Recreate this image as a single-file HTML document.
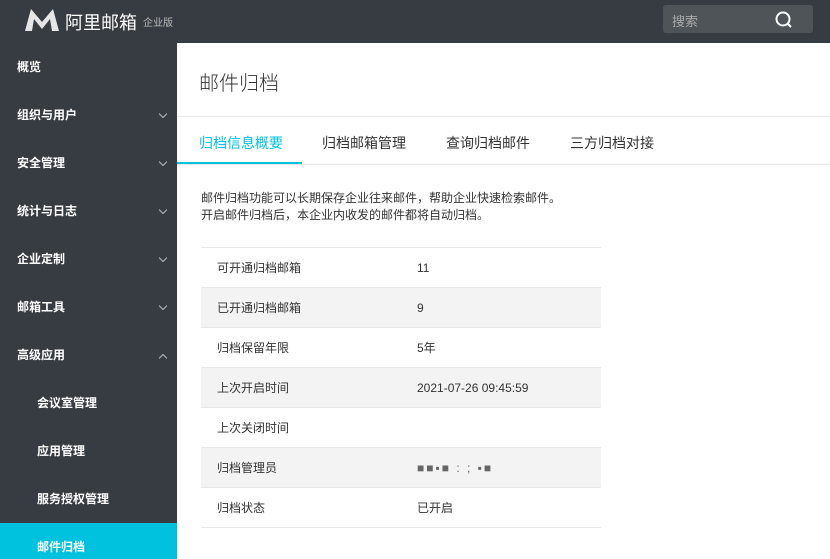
<!DOCTYPE html><html><head><meta charset="utf-8"><style>
*{margin:0;padding:0;box-sizing:border-box}
body{width:830px;height:559px;overflow:hidden;font-family:"Liberation Sans","Noto Sans CJK SC",sans-serif;background:#fff;position:relative}
.top{position:absolute;left:0;top:0;width:830px;height:43px;background:#373c42}
.side{position:absolute;left:0;top:43px;width:177px;height:516px;background:#373c42;overflow:hidden}
.side div{height:48px;line-height:48px;color:#fff;font-size:12px;font-weight:bold;padding-left:17px;position:relative}
.side div.sub{padding-left:37px}
.side div.act{background:#00c1de}
.chev{position:absolute;right:11px;top:20px;width:6px;height:6px;border-right:1px solid #bbb;border-bottom:1px solid #bbb;transform:rotate(45deg)}
.up{transform:rotate(-135deg);top:24px}
.h1{position:absolute;left:199px;top:67px;font-size:20px;color:#333;font-weight:300}
.line1{position:absolute;left:177px;top:116px;width:653px;height:1px;background:#e8e8e8}
.tabs{position:absolute;left:177px;top:117px;width:653px;height:48px;border-bottom:1px solid #e5e5e5}
.tab{position:absolute;top:16px;font-size:14px;color:#333}
.desc{position:absolute;left:201px;top:190px;font-size:12px;color:#333;line-height:17px}
table{position:absolute;left:201px;top:247px;width:400px;border-collapse:collapse;font-size:12px;color:#333}
td{height:40px;border-top:1px solid #e8e8e8;border-bottom:1px solid #e8e8e8}
td:first-child{padding-left:16px;width:216px}
tr:nth-child(even){background:#f3f3f3}
</style></head><body>
<div class="top">
<svg style="position:absolute;left:25px;top:9px" width="34" height="22" viewBox="0 0 34 22"><path d="M0 22 L6 0 L17 13 L28 0 L34 22 L27 22 L25 10 L17 20 L9 10 L7 22Z" fill="#e6e6e6"/></svg>
<div style="position:absolute;left:65px;top:9px;color:#fff;font-size:18px;letter-spacing:0">阿里邮箱</div>
<div style="position:absolute;left:143px;top:14px;color:#bbb;font-size:10px">企业版</div>
<div style="position:absolute;left:663px;top:5px;width:150px;height:28px;background:#4e5458;border-radius:3px"><span style="position:absolute;left:9px;top:6px;font-size:13px;color:#aaa">搜索</span>
<svg style="position:absolute;left:111px;top:5px" width="20" height="20" viewBox="0 0 20 20"><circle cx="9" cy="9" r="6.5" stroke="#fff" stroke-width="2" fill="none"/><path d="M13 13 L17 17" stroke="#fff" stroke-width="2"/></svg></div>
</div>
<div class="side">
<div>概览</div>
<div>组织与用户<i class="chev"></i></div>
<div>安全管理<i class="chev"></i></div>
<div>统计与日志<i class="chev"></i></div>
<div>企业定制<i class="chev"></i></div>
<div>邮箱工具<i class="chev"></i></div>
<div>高级应用<i class="chev up"></i></div>
<div class="sub">会议室管理</div>
<div class="sub">应用管理</div>
<div class="sub">服务授权管理</div>
<div class="sub act">邮件归档</div>
</div>
<div class="h1">邮件归档</div>
<div class="line1"></div>
<div class="tabs">
<div class="tab" style="left:22px;color:#00c1de">归档信息概要</div>
<div style="position:absolute;left:0;top:45px;width:125px;height:2px;background:#00c1de"></div>
<div class="tab" style="left:145px">归档邮箱管理</div>
<div class="tab" style="left:269px">查询归档邮件</div>
<div class="tab" style="left:393px">三方归档对接</div>
</div>
<div class="desc">邮件归档功能可以长期保存企业往来邮件，帮助企业快速检索邮件。<br>开启邮件归档后，本企业内收发的邮件都将自动归档。</div>
<table>
<tr><td>可开通归档邮箱</td><td>11</td></tr>
<tr><td>已开通归档邮箱</td><td>9</td></tr>
<tr><td>归档保留年限</td><td>5年</td></tr>
<tr><td>上次开启时间</td><td>2021-07-26 09:45:59</td></tr>
<tr><td>上次关闭时间</td><td></td></tr>
<tr><td>归档管理员</td><td><span style="color:#666;letter-spacing:2px">■■▪■ : ; ▪■</span></td></tr>
<tr><td>归档状态</td><td>已开启</td></tr>
</table>
</body></html>
